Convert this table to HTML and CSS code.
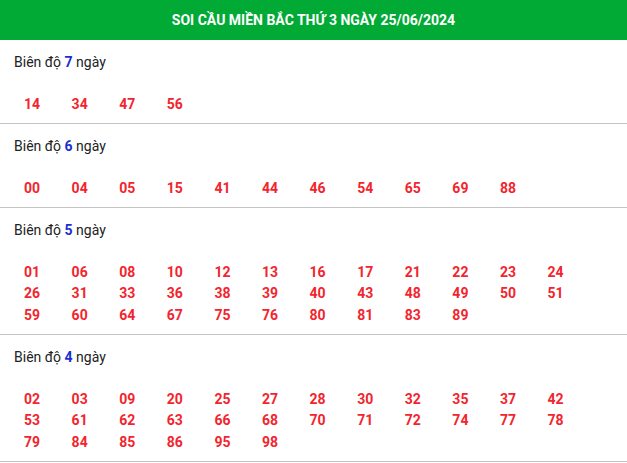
FILE: index.html
```html
<!DOCTYPE html>
<html lang="vi">
<head>
<meta charset="utf-8">
<link rel="stylesheet" href="styles.css">
</head>
<body>
<div class="box">
  <div class="title">SOI CẦU MIỀN BẮC THỨ 3 NGÀY 25/06/2024</div>
  <div class="sec">
    <div class="label">Biên độ <b>7</b> ngày</div>
    <div class="nums"><span>14</span><span>34</span><span>47</span><span>56</span></div>
  </div>
  <div class="sec">
    <div class="label">Biên độ <b>6</b> ngày</div>
    <div class="nums"><span>00</span><span>04</span><span>05</span><span>15</span><span>41</span><span>44</span><span>46</span><span>54</span><span>65</span><span>69</span><span>88</span></div>
  </div>
  <div class="sec">
    <div class="label">Biên độ <b>5</b> ngày</div>
    <div class="nums"><span>01</span><span>06</span><span>08</span><span>10</span><span>12</span><span>13</span><span>16</span><span>17</span><span>21</span><span>22</span><span>23</span><span>24</span><span>26</span><span>31</span><span>33</span><span>36</span><span>38</span><span>39</span><span>40</span><span>43</span><span>48</span><span>49</span><span>50</span><span>51</span><span>59</span><span>60</span><span>64</span><span>67</span><span>75</span><span>76</span><span>80</span><span>81</span><span>83</span><span>89</span></div>
  </div>
  <div class="sec">
    <div class="label">Biên độ <b>4</b> ngày</div>
    <div class="nums"><span>02</span><span>03</span><span>09</span><span>20</span><span>25</span><span>27</span><span>28</span><span>30</span><span>32</span><span>35</span><span>37</span><span>42</span><span>53</span><span>61</span><span>62</span><span>63</span><span>66</span><span>68</span><span>70</span><span>71</span><span>72</span><span>74</span><span>77</span><span>78</span><span>79</span><span>84</span><span>85</span><span>86</span><span>95</span><span>98</span></div>
  </div>
</div>
</body>
</html>
```

FILE: styles.css
```css
html, body {
  margin: 0;
  padding: 0;
  background: #fff;
}
body {
  font-family: Roboto, "Liberation Sans", Arial, sans-serif;
  color: #222;
}
.box {
  width: 627px;
}
.title {
  background: #00aa35;
  color: #fff;
  font-weight: 700;
  font-size: 14px;
  height: 40px;
  line-height: 40px;
  text-align: center;
}
.sec {
  padding: 10px 14px 8px 14px;
  border-bottom: 1px solid #c4c4c4;
}
.label {
  font-size: 14px;
  line-height: 24px;
}
.label b {
  color: #1a2fd0;
  font-weight: 700;
}
.nums {
  margin-top: 19.5px;
  display: flex;
  flex-wrap: wrap;
}
.nums span {
  width: 47.6px;
  box-sizing: border-box;
  padding-left: 10px;
  color: #f2252e;
  font-weight: 700;
  font-size: 14px;
  line-height: 21.5px;
}
```
